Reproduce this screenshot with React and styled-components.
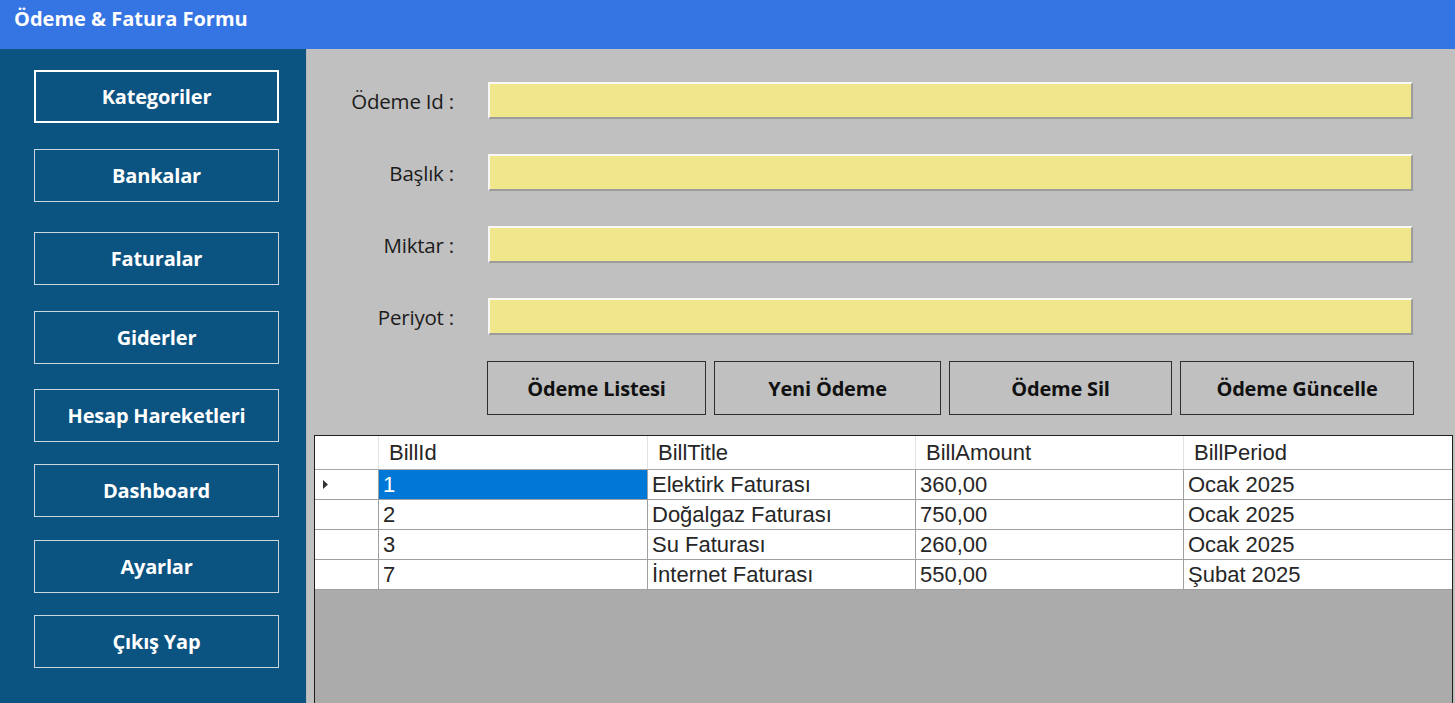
import React from 'react';
import styled, { createGlobalStyle } from 'styled-components';

const Global = createGlobalStyle`
  html, body { margin: 0; padding: 0; height: 100%; overflow: hidden; }
  body { font-family: "Open Sans", "Noto Sans", sans-serif; }
  #root { height: 100%; }
  * { box-sizing: border-box; }
`;

const Window = styled.div`
  display: flex;
  flex-direction: column;
  height: 100vh;
  width: 100vw;
  overflow: hidden;
`;

const TitleBar = styled.header`
  flex: none;
  height: 49px;
  background: #3574e3;
  color: #ffffff;
  font-weight: 700;
  font-size: 20px;
  line-height: 26px;
  padding: 6px 14px 0;
`;

const Body = styled.div`
  display: flex;
  flex: 1;
  min-height: 0;
`;

const Sidebar = styled.nav`
  flex: none;
  width: 306px;
  background: #0b5381;
  display: flex;
  flex-direction: column;
  align-items: flex-start;
  padding-left: 34px;
`;

const NavButton = styled.button`
  margin-top: ${(p) => p.$top}px;
  width: 245px;
  height: 53px;
  background: transparent;
  color: #ffffff;
  font-family: "Open Sans", "Noto Sans", sans-serif;
  font-weight: 700;
  font-size: 20px;
  letter-spacing: -0.2px;
  border: ${(p) => (p.$active ? '2px solid #ffffff' : '1px solid #c9d6de')};
  cursor: pointer;
  padding: 0;
`;

const Main = styled.main`
  flex: 1;
  min-width: 0;
  background: #c0c0c0;
  border-left: 1px solid #b7b7b7;
  display: flex;
  flex-direction: column;
  padding-top: 33px;
`;

const Form = styled.div`
  display: grid;
  grid-template-columns: 148px 925px;
  column-gap: 33px;
  row-gap: 35px;
  align-items: center;
`;

const Label = styled.label`
  text-align: right;
  padding-right: 1px;
  font-size: 20.5px;
  letter-spacing: -0.2px;
  color: #1b1b1b;
`;

const Field = styled.input`
  height: 37px;
  width: 100%;
  background: #f0e68c;
  border-style: solid;
  border-width: 2px;
  border-color: #f7f7f7 #9c9c9c #9c9c9c #f7f7f7;
  outline: none;
  font-size: 18px;
  padding: 0 6px;
`;

const ActionRow = styled.div`
  display: flex;
  gap: 8px;
  margin: 26px 0 0 180px;
`;

const ActionButton = styled.button`
  width: ${(p) => p.$w}px;
  height: 54px;
  background: #c0c0c0;
  border: 1px solid #2e2e2e;
  color: #111111;
  font-family: "Open Sans", "Noto Sans", sans-serif;
  font-weight: 700;
  font-size: 20px;
  letter-spacing: -0.2px;
  padding: 0;
  cursor: pointer;
`;

const GridBox = styled.div`
  margin: 20px 0 0 7px;
  width: 1139px;
  height: 300px;
  flex: none;
  background: #ababab;
  border: 1px solid #1e1e1e;
  border-bottom: none;
  font-family: "Liberation Sans", Arial, sans-serif;
  font-size: 22px;
  color: #262626;
`;

const Row = styled.div`
  display: grid;
  grid-template-columns: 64px 269px 268px 268px 1fr;
  height: ${(p) => (p.$header ? 34 : 30)}px;
  background: #ffffff;
  border-bottom: 1px solid ${(p) => (p.$header ? '#a9a9a9' : '#a0a0a0')};
`;

const Cell = styled.div`
  display: flex;
  align-items: center;
  padding-left: ${(p) => (p.$header ? 10 : 4)}px;
  border-right: 1px solid ${(p) => (p.$header ? '#e2e2e2' : '#a0a0a0')};
  background: ${(p) => (p.$selected ? '#0078d7' : '#ffffff')};
  color: ${(p) => (p.$selected ? '#ffffff' : '#262626')};
  white-space: nowrap;
  overflow: hidden;
  &:last-child { border-right: none; }
`;

const RowHead = styled.div`
  display: flex;
  align-items: center;
  padding-left: 8px;
  border-right: 1px solid ${(p) => (p.$header ? '#e2e2e2' : '#a0a0a0')};
  background: #ffffff;
`;

const Pointer = () => (
  <svg width="6" height="9" viewBox="0 0 6 9">
    <path d="M0 0 L5 4.5 L0 9 Z" fill="#333" />
  </svg>
);

const navItems = [
  { label: 'Kategoriler', top: 21, active: true },
  { label: 'Bankalar', top: 26 },
  { label: 'Faturalar', top: 30 },
  { label: 'Giderler', top: 26 },
  { label: 'Hesap Hareketleri', top: 25 },
  { label: 'Dashboard', top: 22 },
  { label: 'Ayarlar', top: 23 },
  { label: 'Çıkış Yap', top: 22 },
];

const fields = ['Ödeme Id :', 'Başlık :', 'Miktar :', 'Periyot :'];

const actions = [
  { label: 'Ödeme Listesi', w: 219 },
  { label: 'Yeni Ödeme', w: 227 },
  { label: 'Ödeme Sil', w: 223 },
  { label: 'Ödeme Güncelle', w: 234 },
];

const columns = ['BillId', 'BillTitle', 'BillAmount', 'BillPeriod'];

const rows = [
  ['1', 'Elektirk Faturası', '360,00', 'Ocak 2025'],
  ['2', 'Doğalgaz Faturası', '750,00', 'Ocak 2025'],
  ['3', 'Su Faturası', '260,00', 'Ocak 2025'],
  ['7', 'İnternet Faturası', '550,00', 'Şubat 2025'],
];

export default function App() {
  return (
    <Window>
      <Global />
      <TitleBar>Ödeme &amp; Fatura Formu</TitleBar>
      <Body>
        <Sidebar>
          {navItems.map((n) => (
            <NavButton key={n.label} $top={n.top} $active={n.active}>
              {n.label}
            </NavButton>
          ))}
        </Sidebar>
        <Main>
          <Form>
            {fields.map((f) => (
              <React.Fragment key={f}>
                <Label>{f}</Label>
                <Field />
              </React.Fragment>
            ))}
          </Form>
          <ActionRow>
            {actions.map((a) => (
              <ActionButton key={a.label} $w={a.w}>
                {a.label}
              </ActionButton>
            ))}
          </ActionRow>
          <GridBox>
            <Row $header>
              <RowHead $header />
              {columns.map((c) => (
                <Cell key={c} $header>
                  {c}
                </Cell>
              ))}
            </Row>
            {rows.map((r, i) => (
              <Row key={r[0]}>
                <RowHead>{i === 0 && <Pointer />}</RowHead>
                {r.map((v, j) => (
                  <Cell key={j} $selected={i === 0 && j === 0}>
                    {v}
                  </Cell>
                ))}
              </Row>
            ))}
          </GridBox>
        </Main>
      </Body>
    </Window>
  );
}
